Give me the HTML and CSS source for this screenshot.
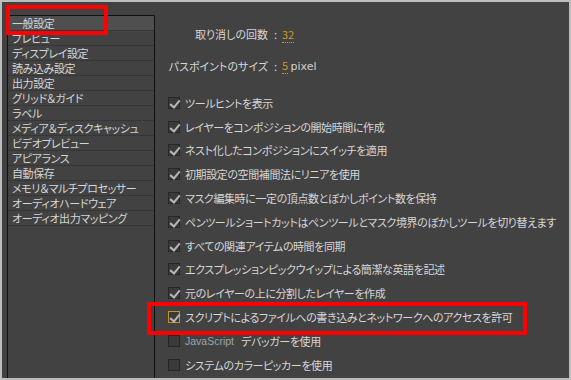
FILE: index.html
```html
<!DOCTYPE html>
<html lang="ja">
<head>
    <meta charset="UTF-8">
    <meta name="viewport" content="width=device-width, initial-scale=1.0">
    <title>環境設定</title>
    <link rel="stylesheet" href="styles.css">
</head>
<body>
    <div class="window">
        <ul class="categories">
            <li class="selected">一般設定</li>
            <li>プレビュー</li>
            <li>ディスプレイ設定</li>
            <li>読み込み設定</li>
            <li>出力設定</li>
            <li>グリッド＆ガイド</li>
            <li>ラベル</li>
            <li>メディア＆ディスクキャッシュ</li>
            <li>ビデオプレビュー</li>
            <li>アピアランス</li>
            <li>自動保存</li>
            <li>メモリ＆マルチプロセッサー</li>
            <li>オーディオハードウェア</li>
            <li>オーディオ出力マッピング</li>
        </ul>

        <div class="settings">
            <div class="fields">
                <span class="field-label">取り消しの回数<span class="colon">:</span></span>
                <span><span class="value">32</span></span>
                <span class="field-label">パスポイントのサイズ<span class="colon">:</span></span>
                <span><span class="value">5</span> <span class="unit">pixel</span></span>
            </div>

            <ul class="options">
                <li><span class="box checked"></span>ツールヒントを表示</li>
                <li><span class="box checked"></span>レイヤーをコンポジションの開始時間に作成</li>
                <li><span class="box checked"></span>ネスト化したコンポジションにスイッチを適用</li>
                <li><span class="box checked"></span>初期設定の空間補間法にリニアを使用</li>
                <li><span class="box checked"></span>マスク編集時に一定の頂点数とぼかしポイント数を保持</li>
                <li><span class="box checked"></span>ペンツールショートカットはペンツールとマスク境界のぼかしツールを切り替えます</li>
                <li><span class="box checked"></span>すべての関連アイテムの時間を同期</li>
                <li><span class="box checked"></span>エクスプレッションピックウイップによる簡潔な英語を記述</li>
                <li><span class="box checked"></span>元のレイヤーの上に分割したレイヤーを作成</li>
                <li><span class="box checked focused"></span>スクリプトによるファイルへの書き込みとネットワークへのアクセスを許可</li>
                <li><span class="box"></span><span class="latin">JavaScript</span>&nbsp;デバッガーを使用</li>
                <li><span class="box"></span>システムのカラーピッカーを使用</li>
            </ul>
        </div>
    </div>

    <div class="mark mark-category"></div>
    <div class="mark mark-option"></div>
</body>
</html>
```

FILE: styles.css
```css
* {
    box-sizing: border-box;
}

html, body {
    margin: 0;
    height: 100%;
}

body {
    position: relative;
    padding: 2px;
    background-color: #bdbdbd;
    font-family: "Noto Sans CJK JP", "Noto Sans", sans-serif;
    font-size: 11px;
    font-feature-settings: "palt";
    color: #d6d6d6;
    overflow: hidden;
}

.window {
    display: flex;
    height: 100%;
    background-color: #424242;
}

/* category list */
.categories {
    list-style: none;
    margin: 13px 0 0 5px;
    padding: 0;
    width: 148px;
    flex-shrink: 0;
    border: 1px solid #111;
    border-bottom: none;
}

.categories li {
    height: 15px;
    line-height: 14px;
    padding-left: 4px;
    border-bottom: 1px solid #363636;
    white-space: nowrap;
    letter-spacing: -0.4px;
    overflow: hidden;
}

.categories li.selected {
    background-color: #4f4f4f;
}

/* settings panel */
.settings {
    flex: 1;
    padding: 24px 0 0 13px;
}

.fields {
    display: grid;
    grid-template-columns: 109px auto;
    column-gap: 5px;
    row-gap: 14px;
    align-items: center;
    line-height: 17px;
}

.field-label {
    text-align: right;
    white-space: nowrap;
}

.colon {
    margin-left: 6px;
}

.value {
    color: #d09a1e;
    border-bottom: 1px dotted #d09a1e;
}

.unit {
    color: #d0d0d0;
    font-family: "DejaVu Sans", sans-serif;
}

.options {
    list-style: none;
    margin: 16px 0 0;
    padding: 0;
}

.options li {
    display: flex;
    align-items: center;
    gap: 5px;
    height: 23.8px;
    white-space: nowrap;
    letter-spacing: -0.4px;
}

.box {
    width: 12px;
    height: 12px;
    flex-shrink: 0;
    border: 1px solid #262626;
    background-color: #3a3a3a;
    position: relative;
}

.box.checked::after {
    content: "";
    position: absolute;
    left: 3px;
    top: 0;
    width: 4px;
    height: 8px;
    border: solid #b8b8b8;
    border-width: 0 2px 2px 0;
    transform: rotate(40deg);
}

.box.focused {
    border-color: #c8921a;
}

.latin {
    font-family: "Liberation Sans", sans-serif;
    font-size: 10.5px;
    letter-spacing: 0;
    color: #9aa4ae;
}

/* annotation frames */
.mark {
    position: absolute;
    border: 4px solid #ff0000;
}

.mark-category {
    left: 6px;
    top: 5px;
    width: 102px;
    height: 30px;
}

.mark-option {
    left: 147px;
    top: 302px;
    width: 380px;
    height: 33px;
}
```
